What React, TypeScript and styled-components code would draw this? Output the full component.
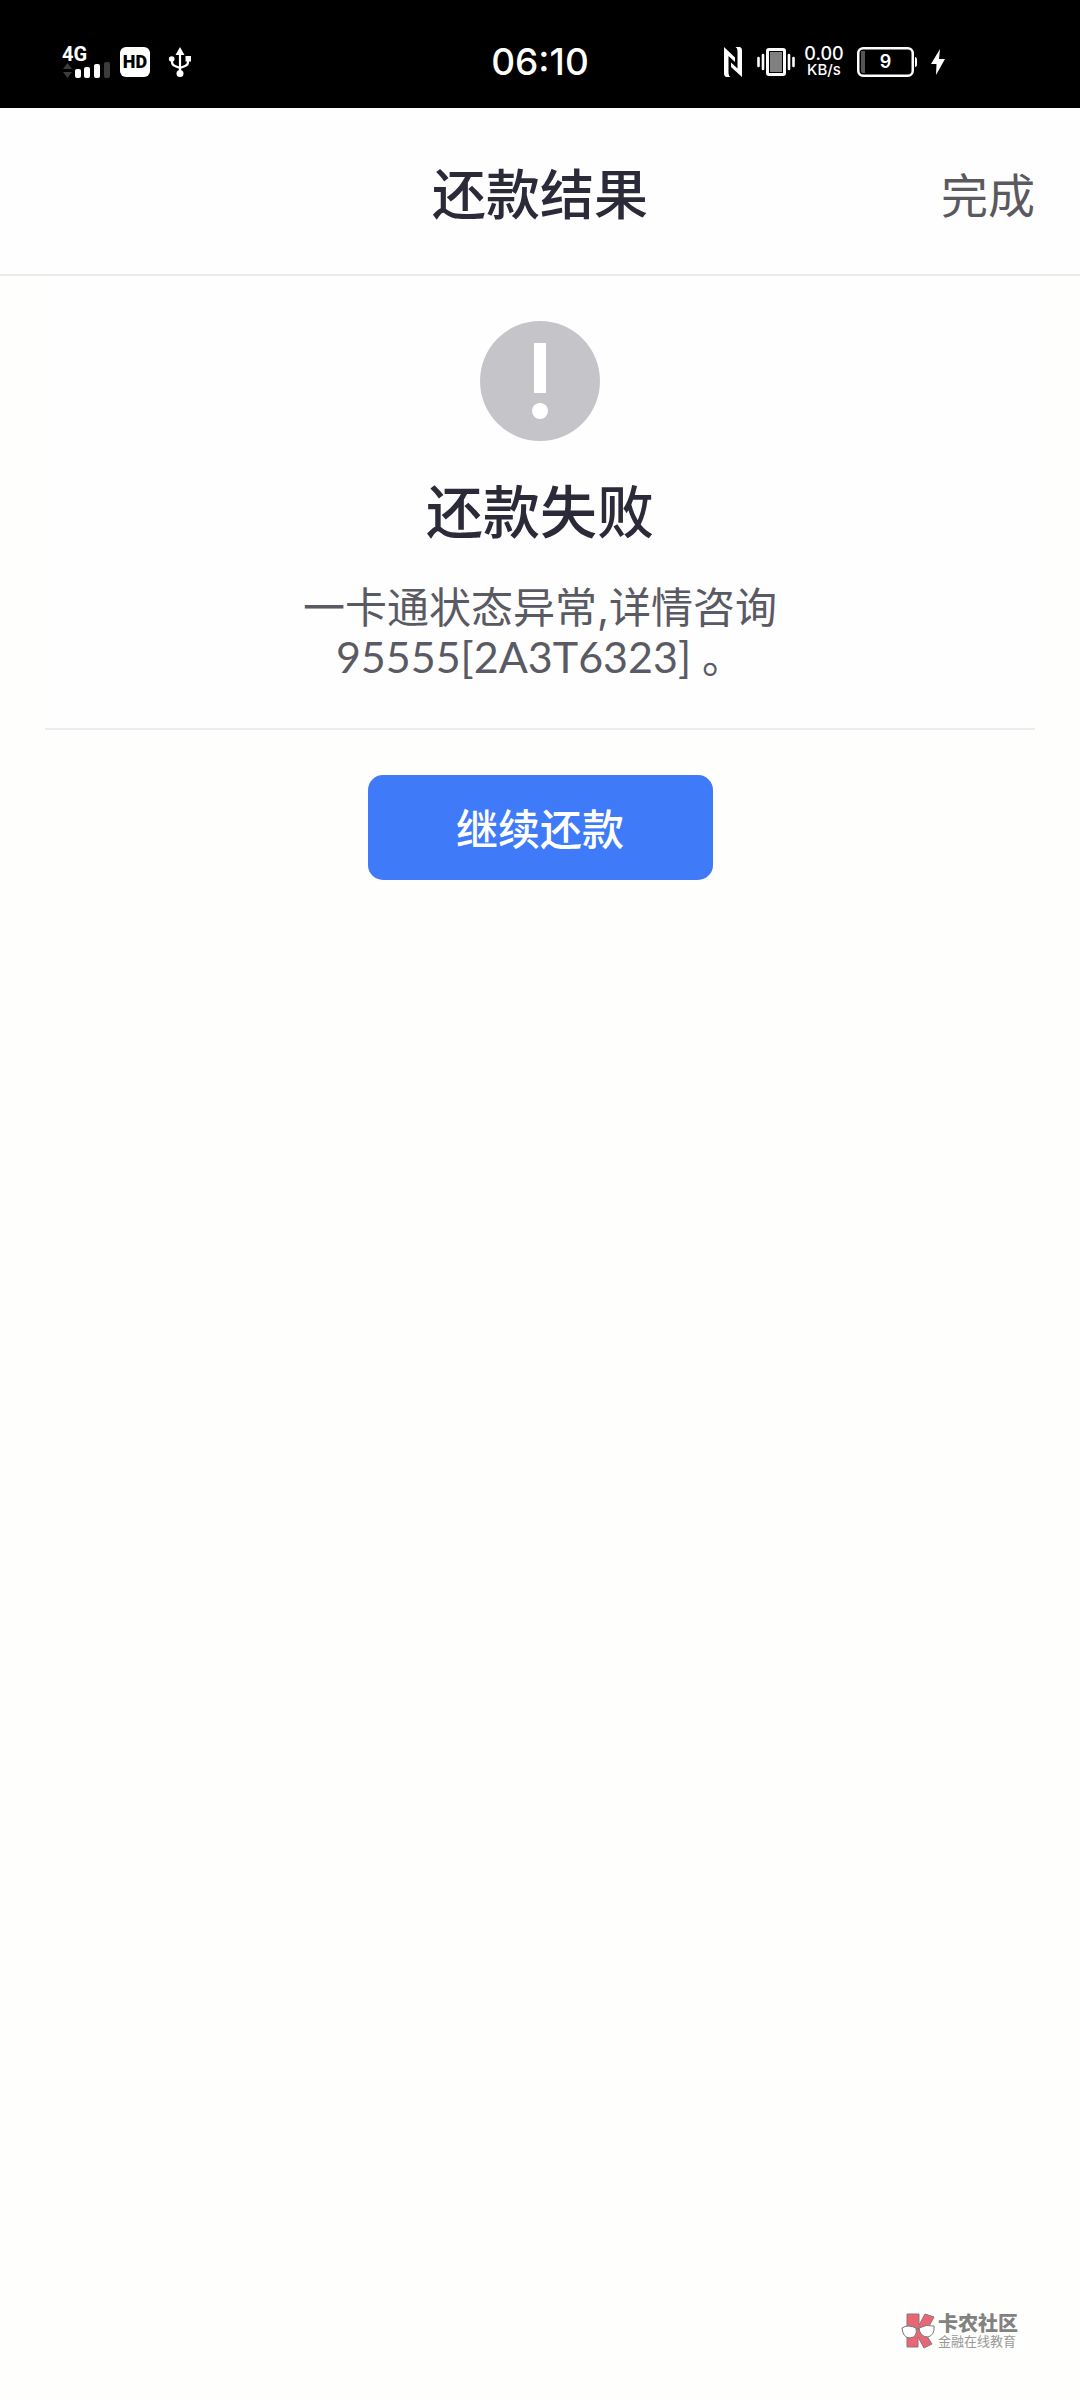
import React from 'react';
import styled, { createGlobalStyle } from 'styled-components';

const GlobalStyle = createGlobalStyle`
  *, *::before, *::after { box-sizing: border-box; }
  body {
    margin: 0;
    background: #fefefd;
    font-family: Inter, "Noto Sans CJK SC", sans-serif;
    color: #2b2a38;
  }
  h1, h2, p { margin: 0; }
`;

const Page = styled.div`
  min-height: 100vh;
  display: flex;
  flex-direction: column;
`;

const StatusBar = styled.div`
  display: grid;
  grid-template-columns: 1fr auto 1fr;
  align-items: center;
  height: 108px;
  padding: 16px 135px 0 62px;
  background: #000;
  color: #fff;
`;

const StatusGroup = styled.div<{ $end?: boolean; $gap: number }>`
  display: flex;
  align-items: center;
  justify-content: ${(p) => (p.$end ? 'flex-end' : 'flex-start')};
  gap: ${(p) => p.$gap}px;
  width: 0;
  min-width: 100%;
`;

const Clock = styled.time`
  font-size: 37px;
  line-height: 40px;
  font-weight: 500;
  padding-left: 73px;
`;

const Network = styled.div`
  display: flex;
  flex-direction: column;
  width: 48px;
  font: 700 20px/16px Roboto, sans-serif;
`;

const HdBadge = styled.span`
  display: grid;
  place-items: center;
  width: 30px;
  height: 30px;
  margin-right: 8px;
  border-radius: 6px;
  background: #fff;
  color: #000;
  font: 900 18px/30px Roboto, sans-serif;
`;

const Speed = styled.div`
  display: flex;
  flex-direction: column;
  align-items: center;
  width: 38px;
  margin-left: -4px;
  font-weight: 500;
`;

const SpeedValue = styled.span`
  font-size: 18px;
  line-height: 16px;
`;

const SpeedUnit = styled.span`
  font-size: 15px;
  line-height: 16px;
`;

const Header = styled.header`
  display: grid;
  grid-template-columns: 1fr auto 1fr;
  align-items: center;
  height: 168px;
  padding: 10px 45px 0;
  background: #fefefe;
  border-bottom: 2px solid #ececec;
`;

const HeaderTitle = styled.h1`
  grid-column: 2;
  font-size: 54px;
  line-height: 80px;
  font-weight: 500;
`;

const DoneButton = styled.button`
  justify-self: end;
  padding: 0;
  border: 0;
  background: none;
  color: #5a5960;
  font-family: inherit;
  font-size: 47px;
  line-height: 72px;
  cursor: pointer;
`;

const Main = styled.main`
  display: flex;
  flex-direction: column;
  align-items: center;
  padding: 0 45px;
`;

const Result = styled.section`
  display: flex;
  flex-direction: column;
  align-items: center;
  align-self: stretch;
  padding: 45px 0;
  background: #fefefe;
  border-bottom: 2px solid #ececee;
  text-align: center;
`;

const ResultTitle = styled.h2`
  margin-top: 30px;
  font-size: 57px;
  line-height: 84px;
  font-weight: 500;
`;

const Message = styled.p`
  max-width: 500px;
  margin-top: 28px;
  color: #5a5a64;
  font-size: 42px;
  line-height: 50px;
`;

const Code = styled.span`
  font-family: Lato, sans-serif;
  font-size: 43px;
  line-height: 1;
`;

const PrimaryButton = styled.button`
  width: 345px;
  height: 105px;
  margin-top: 45px;
  padding: 4px 0 0;
  border: 0;
  border-radius: 15px;
  background: #3f7af8;
  color: #fff;
  font-family: inherit;
  font-size: 42px;
  line-height: 60px;
  font-weight: 500;
  cursor: pointer;
`;

const Brand = styled.footer`
  display: flex;
  align-items: center;
  align-self: flex-end;
  gap: 3px;
  margin-top: auto;
  padding: 0 62px 51px 0;
  color: #828282;
`;

const BrandText = styled.div`
  display: flex;
  flex-direction: column;
  padding-top: 2px;
`;

const BrandName = styled.strong`
  font-size: 20px;
  line-height: 20px;
  font-weight: 900;
`;

const BrandTagline = styled.span`
  font-size: 13px;
  line-height: 15px;
  color: #999;
`;

const SignalBars = () => (
  <svg width="48" height="16" viewBox="0 0 48 16" aria-hidden="true">
    <path d="M1 7 5.500 1 10 7ZM1 10 5.500 16 10 10Z" fill="#3c3c3c" />
    <rect x="13" y="7" width="6" height="9" rx="2" fill="#fff" />
    <rect x="22" y="5" width="6" height="11" rx="2" fill="#fff" />
    <rect x="32" y="2" width="6" height="14" rx="2" fill="#fff" />
    <rect x="42" y="0" width="6" height="16" rx="2" fill="#3c3c3c" />
  </svg>
);

const UsbIcon = () => (
  <svg width="24" height="30" viewBox="0 0 24 30" aria-hidden="true">
    <path d="M12 0 16.500 8h-9Z" fill="#fff" />
    <path d="M12 6v20M4 12v3q0 3 3 4l5 2M20 12v3q0 3-3 4l-5 2" fill="none" stroke="#fff" strokeWidth="2.200" />
    <circle cx="12" cy="26.500" r="3.500" fill="#fff" />
    <circle cx="3.700" cy="12" r="2.800" fill="#fff" />
    <rect x="17.500" y="9" width="5.500" height="5.500" fill="#fff" />
  </svg>
);

const NfcIcon = () => (
  <svg width="20" height="30" viewBox="0 0 20 30" aria-hidden="true">
    <path d="M1 0 12 10.500V15L5.500 9V26Q5.500 29 7.500 30H3Q1 29 1 27ZM19 30 8 20V15.500L14.500 21.500V4Q14.500 1 12.500 0H17Q19 1 19 3Z" fill="#fff" />
  </svg>
);

const VibrateIcon = () => (
  <svg width="38" height="28" viewBox="0 0 38 28" aria-hidden="true">
    <rect x="10.500" y="1.500" width="17" height="25" rx="1.500" fill="#808080" stroke="#fff" strokeWidth="3" />
    <rect x="12.500" y="3.500" width="13" height="21" fill="none" stroke="#000" />
    <path d="M1.500 10v8M6 7v14M32 7v14M36.500 10v8" stroke="#fff" strokeWidth="2.600" strokeLinecap="round" />
  </svg>
);

const BatteryIcon = () => (
  <svg width="60" height="30" viewBox="0 0 60 30" role="img" aria-label="9%">
    <rect x="1.250" y="1.250" width="54.500" height="27.500" rx="5" fill="none" stroke="#fff" strokeWidth="2.500" />
    <path d="M4 4h4v22H6q-2 0-2-2Z" fill="#555" />
    <path d="M58 10q2 0 2 3v4q0 3-2 3Z" fill="#fff" />
    <text x="28.500" y="21" fill="#fff" fontSize="18" fontWeight="600" textAnchor="middle">9</text>
  </svg>
);

const BoltIcon = () => (
  <svg width="14" height="26" viewBox="0 0 14 26" aria-hidden="true">
    <path d="M9 0 0 15h5.500L5 26 14 10H8Z" fill="#fff" />
  </svg>
);

const AlertIcon = () => (
  <svg width="120" height="120" viewBox="0 0 120 120" aria-hidden="true">
    <circle cx="60" cy="60" r="60" fill="#c5c4c9" />
    <rect x="54" y="22" width="12" height="50" fill="#fff" />
    <circle cx="60" cy="90" r="8" fill="#fff" />
  </svg>
);

const BrandIcon = () => (
  <svg width="34" height="36" viewBox="0 0 34 36" aria-hidden="true">
    <path
      d="M6 1H18V12L24 1 33 4 27 15 24 20 31 31 23 35 17 24V34H6Z"
      fill="#e96774"
      stroke="#8d7478"
      strokeLinejoin="round"
    />
    <g fill="#fff" stroke="#777">
      <path d="M1 15Q7 11 15 15Q17 24 9 25Q2 25 1 15Z" />
      <path d="M18 15Q25 11 33 13Q34 22 27 24Q19 24 18 15Z" />
      <path d="M15 16q1.500-1.500 3 0" fill="none" />
    </g>
  </svg>
);

export default function App() {
  return (
    <Page>
      <GlobalStyle />
      <StatusBar>
        <StatusGroup $gap={10}>
          <Network>
            <span>4G</span>
            <SignalBars />
          </Network>
          <HdBadge>HD</HdBadge>
          <UsbIcon />
        </StatusGroup>
        <Clock>06:10</Clock>
        <StatusGroup $end $gap={14}>
          <NfcIcon />
          <VibrateIcon />
          <Speed>
            <SpeedValue>0.00</SpeedValue>
            <SpeedUnit>KB/s</SpeedUnit>
          </Speed>
          <BatteryIcon />
          <BoltIcon />
        </StatusGroup>
      </StatusBar>
      <Header>
        <HeaderTitle>还款结果</HeaderTitle>
        <DoneButton type="button">完成</DoneButton>
      </Header>
      <Main>
        <Result>
          <AlertIcon />
          <ResultTitle>还款失败</ResultTitle>
          <Message>
            一卡通状态异常,详情咨询<Code>95555[2A3T6323] </Code>。
          </Message>
        </Result>
        <PrimaryButton type="button">继续还款</PrimaryButton>
      </Main>
      <Brand>
        <BrandIcon />
        <BrandText>
          <BrandName>卡农社区</BrandName>
          <BrandTagline>金融在线教育</BrandTagline>
        </BrandText>
      </Brand>
    </Page>
  );
}
